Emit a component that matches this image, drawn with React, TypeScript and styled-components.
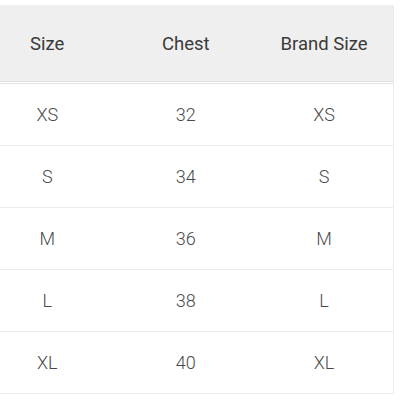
import React from 'react'
import styled, { createGlobalStyle } from 'styled-components'

const GlobalStyle = createGlobalStyle`
    body {
        margin: 0;
        background: #fff;
        font-family: Roboto, "Liberation Sans", sans-serif;
    }
`

export const ChartWrapper = styled.div`
    padding-top: 5px;
    overflow: hidden;
    width: 400px;
    height: 395px;
`

export const SizeTable = styled.table`
    width: 416px;
    margin-left: -22px;
    border-collapse: collapse;
    table-layout: fixed;
    border-right: 1px solid #ececec;
`

export const HeadCell = styled.th`
    height: 77px;
    padding: 2px 0 0 0;
    box-sizing: border-box;
    background-color: #efefef;
    border-bottom: 3px double #e2e2e2;
    font-size: 18.5px;
    font-weight: 400;
    color: #3a3a3a;
    text-align: center;
    vertical-align: middle;
`

export const BodyCell = styled.td`
    height: 61px;
    padding: 0;
    border-bottom: 1px solid #ececec;
    font-size: 18px;
    font-weight: 300;
    color: #4a4a4a;
    text-align: center;
    vertical-align: middle;
`

const sizes = [
    { size: 'XS', chest: 32, brand: 'XS' },
    { size: 'S', chest: 34, brand: 'S' },
    { size: 'M', chest: 36, brand: 'M' },
    { size: 'L', chest: 38, brand: 'L' },
    { size: 'XL', chest: 40, brand: 'XL' },
]

const App = () => {
    return (
        <>
            <GlobalStyle />
            <ChartWrapper>
                <SizeTable>
                    <thead>
                        <tr>
                            <HeadCell>Size</HeadCell>
                            <HeadCell>Chest</HeadCell>
                            <HeadCell>Brand Size</HeadCell>
                        </tr>
                    </thead>
                    <tbody>
                        {sizes.map(row => (
                            <tr key={row.size}>
                                <BodyCell>{row.size}</BodyCell>
                                <BodyCell>{row.chest}</BodyCell>
                                <BodyCell>{row.brand}</BodyCell>
                            </tr>
                        ))}
                    </tbody>
                </SizeTable>
            </ChartWrapper>
        </>
    )
}

export default App
